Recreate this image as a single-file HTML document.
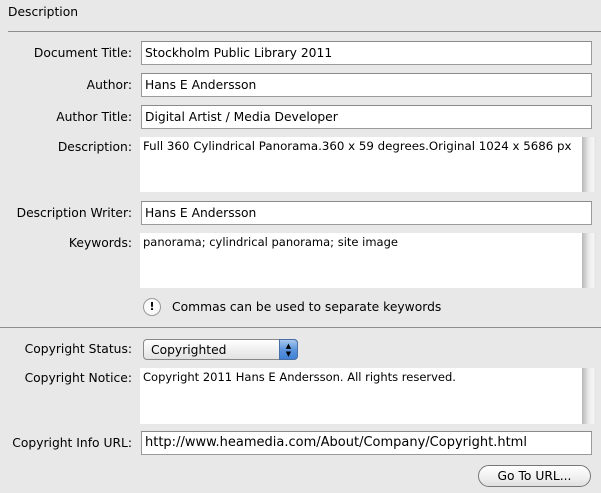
<html><head><style>
body{margin:0;width:601px;height:493px;background:#e8e8e8;font-family:"DejaVu Sans","Liberation Sans",sans-serif;font-size:12.3px;color:#000;position:relative;overflow:hidden}
.a{position:absolute}
.l{position:absolute;right:469px;text-align:right;white-space:nowrap}
.f{position:absolute;left:141px;background:#fff;border:1px solid #9a9a9a;border-top-color:#8a8a8a;line-height:22px;padding-left:3px;box-sizing:border-box;width:451px;height:24px;white-space:nowrap}
.t{position:absolute;left:140px;width:442px;background:#fff;padding:2px 3px;box-sizing:border-box;white-space:nowrap}
.s{position:absolute;left:582px;width:14px;background:linear-gradient(90deg,#b8b8b8,#ececec 50%,#f6f6f6 80%,#e0e0e0)}
</style></head><body>
<div class="a" style="left:8px;top:5px">Description</div>
<div class="a" style="left:8px;top:31px;width:593px;height:1px;background:#8e8e8e"></div>
<div class="l" style="top:46px">Document Title:</div><div class="f" style="top:41px">Stockholm Public Library 2011</div>
<div class="l" style="top:78px">Author:</div><div class="f" style="top:73px">Hans E Andersson</div>
<div class="l" style="top:110px">Author Title:</div><div class="f" style="top:105px">Digital Artist / Media Developer</div>
<div class="l" style="top:140px">Description:</div><div class="t" style="top:137px;height:55px;font-size:11.8px">Full 360 Cylindrical Panorama.360 x 59 degrees.Original 1024 x 5686 px</div><div class="s" style="top:137px;height:55px"></div>
<div class="l" style="top:206px">Description Writer:</div><div class="f" style="top:201px">Hans E Andersson</div>
<div class="l" style="top:236px">Keywords:</div><div class="t" style="top:233px;height:55px;font-size:11.5px">panorama; cylindrical panorama; site image</div><div class="s" style="top:233px;height:55px"></div>
<div class="a" style="left:143px;top:298px;width:16px;height:16px;border-radius:50%;background:#fafafa;border:1px solid #999;font-size:11px;font-weight:bold;text-align:center;line-height:16px">!</div>
<div class="a" style="left:172px;top:300px">Commas can be used to separate keywords</div>
<div class="a" style="left:0;top:327px;width:601px;height:1px;background:#8e8e8e"></div>
<div class="l" style="top:342px">Copyright Status:</div>
<div class="a" style="left:143px;top:339px;width:155px;height:21px;box-sizing:border-box;border:1px solid #888;border-radius:4px;background:linear-gradient(#fff,#f0f0f0 50%,#e2e2e2);padding-left:7px;line-height:20px">Copyrighted<div class="a" style="right:-1px;top:-1px;width:19px;height:21px;border-radius:0 4px 4px 0;background:linear-gradient(#a8c8ee,#5d95dc 50%,#3f80d6);border:1px solid #4a6fa5;box-sizing:border-box;color:#000;font-size:7px;line-height:8px;text-align:center;padding-top:2px">▲<br>▼</div></div>
<div class="l" style="top:371px">Copyright Notice:</div><div class="t" style="top:368px;height:56px;font-size:11.5px">Copyright 2011 Hans E Andersson. All rights reserved.</div><div class="s" style="top:368px;height:56px"></div>
<div class="l" style="top:436px">Copyright Info URL:</div><div class="f" style="top:431px;font-size:13px">http://www.heamedia.com/About/Company/Copyright.html</div>
<div class="a" style="left:478px;top:465px;width:113px;height:22px;box-sizing:border-box;border:1px solid #777;border-radius:11px;background:linear-gradient(#fff,#f2f2f2 50%,#e0e0e0);text-align:center;line-height:20px">Go To URL...</div>
</body></html>
